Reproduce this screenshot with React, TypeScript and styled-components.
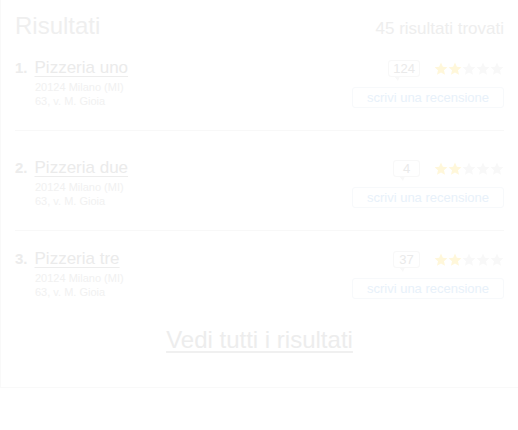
import { FC } from "react";
import styled, { createGlobalStyle } from "styled-components";

const GlobalStyle = createGlobalStyle`
  body {
    margin: 0;
    background: #ffffff;
    font-family: "Liberation Sans", Arial, sans-serif;
  }
`;

const Panel = styled.div`
  border-left: 1px solid #f9f9f9;
  border-bottom: 1px solid #f9f9f9;
  padding: 12px 14px 33px 14px;
`;

const Header = styled.div`
  display: flex;
  justify-content: space-between;
  align-items: baseline;
`;

const Title = styled.h1`
  margin: 0;
  font-size: 24px;
  line-height: 28px;
  font-weight: normal;
  color: #efefef;
`;

const Count = styled.span`
  font-size: 17px;
  color: #eeeeee;
`;

const List = styled.div`
  display: flex;
  flex-direction: column;
`;

const Item = styled.div<{ $top: number; $last?: boolean }>`
  display: flex;
  justify-content: space-between;
  padding: ${(p) => p.$top}px 0 ${(p) => (p.$last ? 0 : 22)}px;
  border-bottom: ${(p) => (p.$last ? "none" : "1px solid #f8f8f8")};
`;

const Info = styled.div`
  display: flex;
  flex-direction: column;
`;

const NameRow = styled.div`
  display: flex;
  align-items: baseline;
  gap: 7px;
  line-height: 22px;
`;

const Num = styled.span`
  font-size: 15px;
  font-weight: bold;
  color: #ececec;
`;

const Name = styled.a`
  font-size: 17px;
  color: #ebebeb;
  text-decoration: underline;
  text-decoration-color: #ededed;
  text-underline-offset: 3px;
`;

const Address = styled.div`
  margin: 1px 0 0 20px;
  font-size: 11px;
  line-height: 14px;
  color: #f1f1f1;
`;

const Side = styled.div`
  display: flex;
  flex-direction: column;
  align-items: flex-end;
  padding-top: 3px;
  gap: 10px;
`;

const RatingRow = styled.div`
  display: flex;
  align-items: center;
  gap: 14px;
`;

const Bubble = styled.span`
  position: relative;
  box-sizing: border-box;
  min-width: 27px;
  height: 17px;
  padding: 0 4px;
  border: 1px solid #f8f8f8;
  border-radius: 3px;
  font-size: 13px;
  line-height: 15px;
  text-align: center;
  color: #eaeaea;

  &::after {
    content: "";
    position: absolute;
    left: 5px;
    bottom: -5px;
    border-left: 4px solid transparent;
    border-right: 2px solid transparent;
    border-top: 5px solid #f8f8f8;
  }
`;

const Stars = styled.div`
  display: flex;
`;

const Star = styled.svg<{ $on: boolean }>`
  width: 14px;
  height: 14px;
  fill: ${(p) => (p.$on ? "#fff7da" : "#f8f8f8")};
`;

const Button = styled.button`
  box-sizing: border-box;
  width: 152px;
  height: 21px;
  padding: 0;
  border: 1px solid #f7f9fb;
  border-radius: 3px;
  background: #ffffff;
  font-family: inherit;
  font-size: 13px;
  color: #e8f1fa;
`;

const Footer = styled.div`
  display: flex;
  justify-content: center;
  margin-top: 27px;
`;

const AllLink = styled.a`
  font-size: 24px;
  line-height: 28px;
  color: #ededed;
  text-decoration: underline;
  text-decoration-color: #f0f0f0;
  text-decoration-thickness: 2px;
  text-underline-offset: 3px;
`;

const StarIcon: FC<{ on: boolean }> = ({ on }) => (
  <Star $on={on} viewBox="0 0 24 24">
    <path d="M12 1l3.2 7.3 7.8.7-5.9 5.2 1.8 7.8L12 18l-6.9 4 1.8-7.8L1 9l7.8-.7z" />
  </Star>
);

const places = [
  { n: 1, name: "Pizzeria uno", reviews: 124, stars: 2, top: 17 },
  { n: 2, name: "Pizzeria due", reviews: 4, stars: 2, top: 26 },
  { n: 3, name: "Pizzeria tre", reviews: 37, stars: 2, top: 17 },
];

const App: FC = () => {
  return (
    <>
      <GlobalStyle />
      <Panel>
        <Header>
          <Title>Risultati</Title>
          <Count>45 risultati trovati</Count>
        </Header>
        <List>
          {places.map((p, i) => (
            <Item key={p.n} $top={p.top} $last={i === places.length - 1}>
              <Info>
                <NameRow>
                  <Num>{p.n}.</Num>
                  <Name>{p.name}</Name>
                </NameRow>
                <Address>
                  20124 Milano (MI)
                  <br />
                  63, v. M. Gioia
                </Address>
              </Info>
              <Side>
                <RatingRow>
                  <Bubble>{p.reviews}</Bubble>
                  <Stars>
                    {[0, 1, 2, 3, 4].map((s) => (
                      <StarIcon key={s} on={s < p.stars} />
                    ))}
                  </Stars>
                </RatingRow>
                <Button>scrivi una recensione</Button>
              </Side>
            </Item>
          ))}
        </List>
        <Footer>
          <AllLink>Vedi tutti i risultati</AllLink>
        </Footer>
      </Panel>
    </>
  );
};

export default App;
